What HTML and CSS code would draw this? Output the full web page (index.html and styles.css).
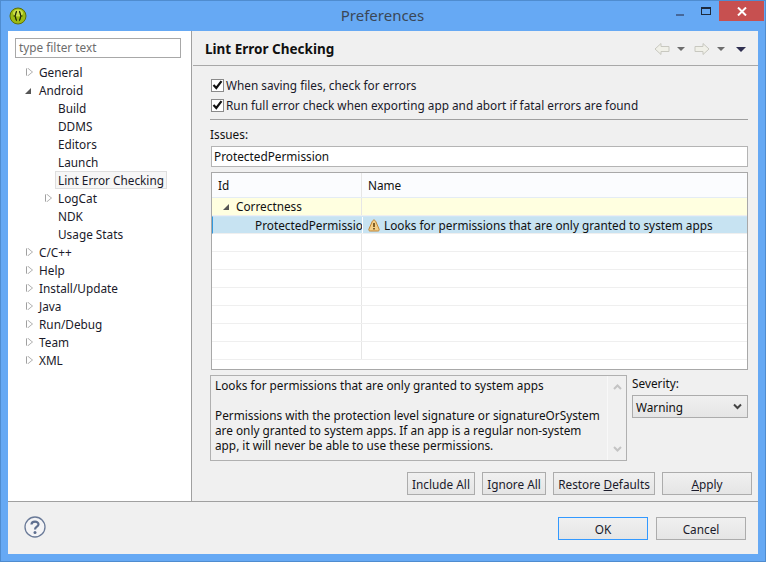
FILE: index.html
```html
<!DOCTYPE html>
<html lang="en">
<head>
    <meta charset="UTF-8">
    <title>Preferences</title>
    <link rel="stylesheet" href="styles.css">
</head>
<body>
    <div class="window">
        <div class="titlebar">
            <svg class="app-icon" width="18" height="18" viewBox="0 0 18 18">
                <circle cx="9" cy="9" r="8" fill="#9dbb12" stroke="#5d6e0a"/>
                <ellipse cx="9" cy="6" rx="5" ry="3.5" fill="#cfe04a"/>
                <path d="M8 4.5C6.2 4.5 7.2 8.5 5.8 9C7.2 9.5 6.2 13.5 8 13.5M10 4.5C11.8 4.5 10.8 8.5 12.2 9C10.8 9.5 11.8 13.5 10 13.5" fill="none" stroke="#1c2405" stroke-width="1.3"/>
            </svg>
            <div class="title">Preferences</div>
            <div class="controls">
                <div class="ctl ctl-min"><span></span></div>
                <div class="ctl ctl-max"><span></span></div>
                <div class="ctl ctl-close">
                    <svg width="10" height="9" viewBox="0 0 10 9"><path d="M1 .5L9 8.5M9 .5L1 8.5" stroke="#fff" stroke-width="2"/></svg>
                </div>
            </div>
        </div>

        <div class="client">
            <div class="main">
                <div class="sidebar">
                    <div class="filter">type filter text</div>
                    <ul class="tree">
                        <li class="node closed">General</li>
                        <li class="node open">Android</li>
                        <li class="node sub">Build</li>
                        <li class="node sub">DDMS</li>
                        <li class="node sub">Editors</li>
                        <li class="node sub">Launch</li>
                        <li class="node sub"><span class="current">Lint Error Checking</span></li>
                        <li class="node sub closed">LogCat</li>
                        <li class="node sub">NDK</li>
                        <li class="node sub">Usage Stats</li>
                        <li class="node closed">C/C++</li>
                        <li class="node closed">Help</li>
                        <li class="node closed">Install/Update</li>
                        <li class="node closed">Java</li>
                        <li class="node closed">Run/Debug</li>
                        <li class="node closed">Team</li>
                        <li class="node closed">XML</li>
                    </ul>
                </div>

                <div class="page">
                    <div class="page-head">
                        <h1>Lint Error Checking</h1>
                        <div class="nav">
                            <svg width="16" height="14" viewBox="0 0 16 14"><path d="M1 7L7 1.5V4.500H15V9.500H7V12.500Z" fill="#f0f0e8" stroke="#c8c8c0"/></svg>
                            <span class="caret"></span>
                            <svg class="nav-fwd" width="16" height="14" viewBox="0 0 16 14"><path d="M15 7L9 1.5V4.500H1V9.500H9V12.500Z" fill="#f0f0e8" stroke="#c8c8c0"/></svg>
                            <span class="caret"></span>
                            <span class="caret caret-menu"></span>
                        </div>
                    </div>

                    <div class="page-body">
                        <label class="check"><span class="box"><svg width="11" height="10" viewBox="0 0 11 10"><path d="M1.500 5L4.300 8L9.500 1.200" fill="none" stroke="#111" stroke-width="2.200"/></svg></span>When saving files, check for errors</label>
                        <label class="check"><span class="box"><svg width="11" height="10" viewBox="0 0 11 10"><path d="M1.500 5L4.300 8L9.500 1.200" fill="none" stroke="#111" stroke-width="2.200"/></svg></span>Run full error check when exporting app and abort if fatal errors are found</label>
                        <div class="rule"></div>
                        <div class="issues-label">Issues:</div>
                        <div class="search">ProtectedPermission</div>

                        <div class="table">
                            <div class="row head"><div class="c-id">Id</div><div class="c-name">Name</div></div>
                            <div class="row group"><div class="c-id"><span class="tw-open"></span>Correctness</div><div class="c-name"></div></div>
                            <div class="row selected">
                                <div class="c-id">ProtectedPermission</div>
                                <div class="c-name">
                                    <svg class="warn" width="12" height="13" viewBox="0 0 12 13"><path d="M6 1C7 1 7.500 2 8 3L11 10C11.500 11.300 11 12 9.800 12H2.200C1 12 .5 11.300 1 10L4 3C4.500 2 5 1 6 1Z" fill="#f3cf88" stroke="#c08432"/><path d="M6 4V8M6 9V10.500" stroke="#5a3a08" stroke-width="1.500"/></svg>
                                    Looks for permissions that are only granted to system apps
                                </div>
                            </div>
                            <div class="row"><div class="c-id"></div><div class="c-name"></div></div>
                            <div class="row"><div class="c-id"></div><div class="c-name"></div></div>
                            <div class="row"><div class="c-id"></div><div class="c-name"></div></div>
                            <div class="row"><div class="c-id"></div><div class="c-name"></div></div>
                            <div class="row"><div class="c-id"></div><div class="c-name"></div></div>
                            <div class="row"><div class="c-id"></div><div class="c-name"></div></div>
                            <div class="row"><div class="c-id"></div><div class="c-name"></div></div>
                        </div>

                        <div class="detail-row">
                            <div class="detail">
                                <div class="detail-text">
                                    <p>Looks for permissions that are only granted to system apps</p>
                                    <p>Permissions with the protection level signature or signatureOrSystem<br>are only granted to system apps. If an app is a regular non-system<br>app, it will never be able to use these permissions.</p>
                                </div>
                                <div class="scroll">
                                    <svg width="9" height="6" viewBox="0 0 9 6"><path d="M1 5L4.500 1.500L8 5" fill="none" stroke="#c4c4c4" stroke-width="2"/></svg>
                                    <svg width="9" height="6" viewBox="0 0 9 6"><path d="M1 1L4.500 4.500L8 1" fill="none" stroke="#c4c4c4" stroke-width="2"/></svg>
                                </div>
                            </div>
                            <div class="severity">
                                <div class="sev-label">Severity:</div>
                                <div class="combo">Warning
                                    <svg width="9" height="7" viewBox="0 0 9 7"><path d="M1 1.500L4.500 5L8 1.500" fill="none" stroke="#444" stroke-width="2"/></svg>
                                </div>
                            </div>
                        </div>

                        <div class="actions">
                            <button class="btn b-inc">Include All</button>
                            <button class="btn b-ign">Ignore All</button>
                            <button class="btn b-res">Restore <u>D</u>efaults</button>
                            <button class="btn b-app"><u>A</u>pply</button>
                        </div>
                    </div>
                </div>
            </div>

            <div class="footer">
                <svg class="help" width="22" height="22" viewBox="0 0 22 22">
                    <circle cx="11" cy="11" r="10" fill="#f4f4f6" stroke="#6a7a98" stroke-width="1.300"/>
                    <path d="M7.500 8.500C7.500 4.800 14.500 4.800 14.500 8.300C14.500 10.800 11 10.500 11 13.500" fill="none" stroke="#5f6f8f" stroke-width="2.200"/>
                    <circle cx="11" cy="16.500" r="1.500" fill="#5f6f8f"/>
                </svg>
                <div class="footer-btns">
                    <button class="btn btn-ok">OK</button>
                    <button class="btn">Cancel</button>
                </div>
            </div>
        </div>
    </div>
</body>
</html>
```

FILE: styles.css
```css
:root {
    --frame: #66a9f4;
    --panel: #f0f0f0;
    --line: #a0a0a0;
    --text: #111;
}

* {
    box-sizing: border-box;
}

body {
    margin: 0;
    font-family: "Noto Sans", "Open Sans", sans-serif;
    font-size: 11.8px;
    color: var(--text);
}

.window {
    width: 766px;
    height: 562px;
    display: flex;
    flex-direction: column;
    background: var(--frame);
    border: 1px solid #4f8ccf;
    padding: 0 7px 7px;
    overflow: hidden;
}

/* title bar */
.titlebar {
    height: 30px;
    flex: none;
    display: flex;
    align-items: center;
    position: relative;
}
.app-icon {
    margin: 0 0 0 1px;
}
.title {
    flex: 1;
    text-align: center;
    font-size: 15px;
    color: #3a4757;
    padding: 0 0 2px 71px;
}
.controls {
    display: flex;
    align-self: flex-start;
    margin-right: -6px;
    height: 20px;
}
.ctl {
    display: flex;
    align-items: center;
    justify-content: center;
    height: 20px;
    width: 26px;
}
.ctl-close {
    width: 45px;
    background: #c75050;
}
.ctl-min span {
    width: 8px;
    height: 2px;
    margin-top: 7px;
    background: #46689a;
}
.ctl-max span {
    width: 10px;
    height: 8px;
    border: 1px solid #1d2a3c;
    border-top-width: 2px;
}

.client {
    flex: 1;
    display: flex;
    flex-direction: column;
    background: var(--panel);
    min-height: 0;
}
.main {
    height: 471px;
    flex: none;
    display: flex;
    border-bottom: 1px solid var(--line);
}

/* left tree */
.sidebar {
    width: 184px;
    flex: none;
    background: #fff;
    border-right: 1px solid var(--line);
    padding: 7px 10px 0 7px;
}
.filter {
    height: 20px;
    border: 1px solid #a8a8a8;
    padding-left: 3px;
    line-height: 17px;
    color: #6d6d6d;
}
.tree {
    list-style: none;
    margin: 5px 0 0;
    padding: 0;
}
.node {
    height: 18px;
    line-height: 18px;
    padding-left: 24px;
    position: relative;
    white-space: nowrap;
    color: #1a1a2a;
}
.node.sub {
    padding-left: 43px;
}
.current {
    display: inline-block;
    height: 18px;
    line-height: 16px;
    margin-left: -3px;
    padding: 0 2px 0 2px;
    background: #f6f6f6;
    border: 1px solid #dedede;
}
.node.closed::before {
    content: "";
    position: absolute;
    left: 12px;
    top: 5px;
    border-left: 5px solid #fff;
    border-top: 4px solid transparent;
    border-bottom: 4px solid transparent;
    filter: drop-shadow(1px 0 0 #a0a0a0) drop-shadow(-1px 0 0 #a0a0a0);
}
.node.sub.closed::before {
    left: 31px;
}
.node.open::before {
    content: "";
    position: absolute;
    left: 10px;
    top: 7px;
    border-left: 6px solid transparent;
    border-bottom: 6px solid #555;
}

/* right page */
.page {
    flex: 1;
    min-width: 0;
    display: flex;
    flex-direction: column;
}
.page-head {
    height: 35px;
    flex: none;
    display: flex;
    align-items: center;
    justify-content: space-between;
    padding: 2px 12px 0 12px;
    margin-left: 1px;
    border-bottom: 1px solid #a8a8a8;
}
h1 {
    margin: 0;
    font-size: 13.5px;
    font-weight: 700;
    color: #101010;
}
.nav {
    display: flex;
    align-items: center;
    gap: 7px;
}
.nav-fwd {
    margin-left: 2px;
}
.caret {
    border-left: 4px solid transparent;
    border-right: 4px solid transparent;
    border-top: 4px solid #6d6d6d;
}
.caret-menu {
    margin-left: 4px;
    border-left-width: 5px;
    border-right-width: 5px;
    border-top: 5px solid #2f2f50;
}

.page-body {
    flex: 1;
    padding: 9px 10px 0 18px;
    position: relative;
}
.check {
    display: flex;
    align-items: center;
    height: 20px;
    color: #1a1a2a;
}
.box {
    width: 13px;
    height: 13px;
    margin: 0 2px 0 1px;
    background: #fff;
    border: 1px solid #8a8a8a;
    display: flex;
    align-items: center;
    justify-content: center;
}
.rule {
    height: 1px;
    background: var(--line);
    margin-top: 4px;
}
.issues-label {
    margin-top: 6px;
    height: 20px;
    line-height: 16px;
}
.search {
    height: 21px;
    margin-left: 1px;
    background: #fff;
    border: 1px solid #b4b4b4;
    padding-left: 2px;
    line-height: 19px;
}

.table {
    height: 198px;
    margin: 5px 0 0 1px;
    background: #fff;
    border: 1px solid #a8a8a8;
    overflow: hidden;
}
.row {
    height: 18px;
    display: flex;
    border-bottom: 1px solid #efefef;
    line-height: 17px;
}
.row.head {
    height: 25px;
    line-height: 25px;
    background: #fbfcfe;
    border-bottom-color: #e4ecf4;
}
.c-id {
    width: 150px;
    flex: none;
    overflow: hidden;
    white-space: nowrap;
    border-right: 1px solid #e6e6e6;
    padding-left: 6px;
}
.c-name {
    flex: 1;
    padding-left: 6px;
    white-space: nowrap;
}
.row.group {
    background: #ffffe0;
}
.row.group .c-id {
    padding-left: 24px;
    position: relative;
}
.tw-open {
    position: absolute;
    left: 11px;
    top: 6px;
    border-left: 6px solid transparent;
    border-bottom: 6px solid #555;
}
.row.selected {
    background: #c7e3f2;
    border-left: 1px solid #3399dd;
    border-top: 1px solid #cfe6f5;
}
.row.selected .c-id {
    padding-left: 42px;
    border-right-color: #fff;
}
.row.selected .c-name {
    padding-left: 5px;
    display: flex;
    align-items: center;
    gap: 4px;
}

.detail-row {
    display: flex;
    margin-top: 5px;
}
.detail {
    width: 417px;
    height: 86px;
    display: flex;
    border: 1px solid #b0b0b0;
    padding: 2px 0 0 4px;
}
.detail-text {
    flex: 1;
    line-height: 15px;
    white-space: nowrap;
}
.detail-text p {
    margin: 0 0 15px;
}
.scroll {
    width: 19px;
    margin-top: -2px;
    padding: 8px 0;
    border-left: 1px solid #f8f8f8;
    display: flex;
    flex-direction: column;
    align-items: center;
    justify-content: space-between;
}
.severity {
    flex: 1;
    padding-left: 5px;
}
.sev-label {
    height: 20px;
    line-height: 16px;
}
.combo {
    height: 23px;
    display: flex;
    align-items: center;
    justify-content: space-between;
    padding: 0 5px 0 3px;
    border: 1px solid #acacac;
    background: linear-gradient(#f0f0f0, #e5e5e5);
}

.btn {
    height: 23px;
    padding: 0;
    font: inherit;
    color: #1a1a2a;
    border: 1px solid #acacac;
    background: linear-gradient(#f0f0f0, #e5e5e5);
}
.actions {
    display: flex;
    gap: 7px;
    margin: 11px -4px 0 0;
    justify-content: flex-end;
}
.b-inc { width: 68px; }
.b-ign { width: 64px; }
.b-res { width: 102px; }
.b-app { width: 90px; }

.footer {
    flex: 1;
    display: flex;
    align-items: center;
    justify-content: space-between;
    padding: 1px 12px 0 16px;
}
.help {
    margin-top: -3px;
}
.footer-btns {
    display: flex;
    gap: 8px;
}
.footer-btns .btn {
    width: 90px;
}
.btn-ok {
    border-color: #3399ff;
}
```
